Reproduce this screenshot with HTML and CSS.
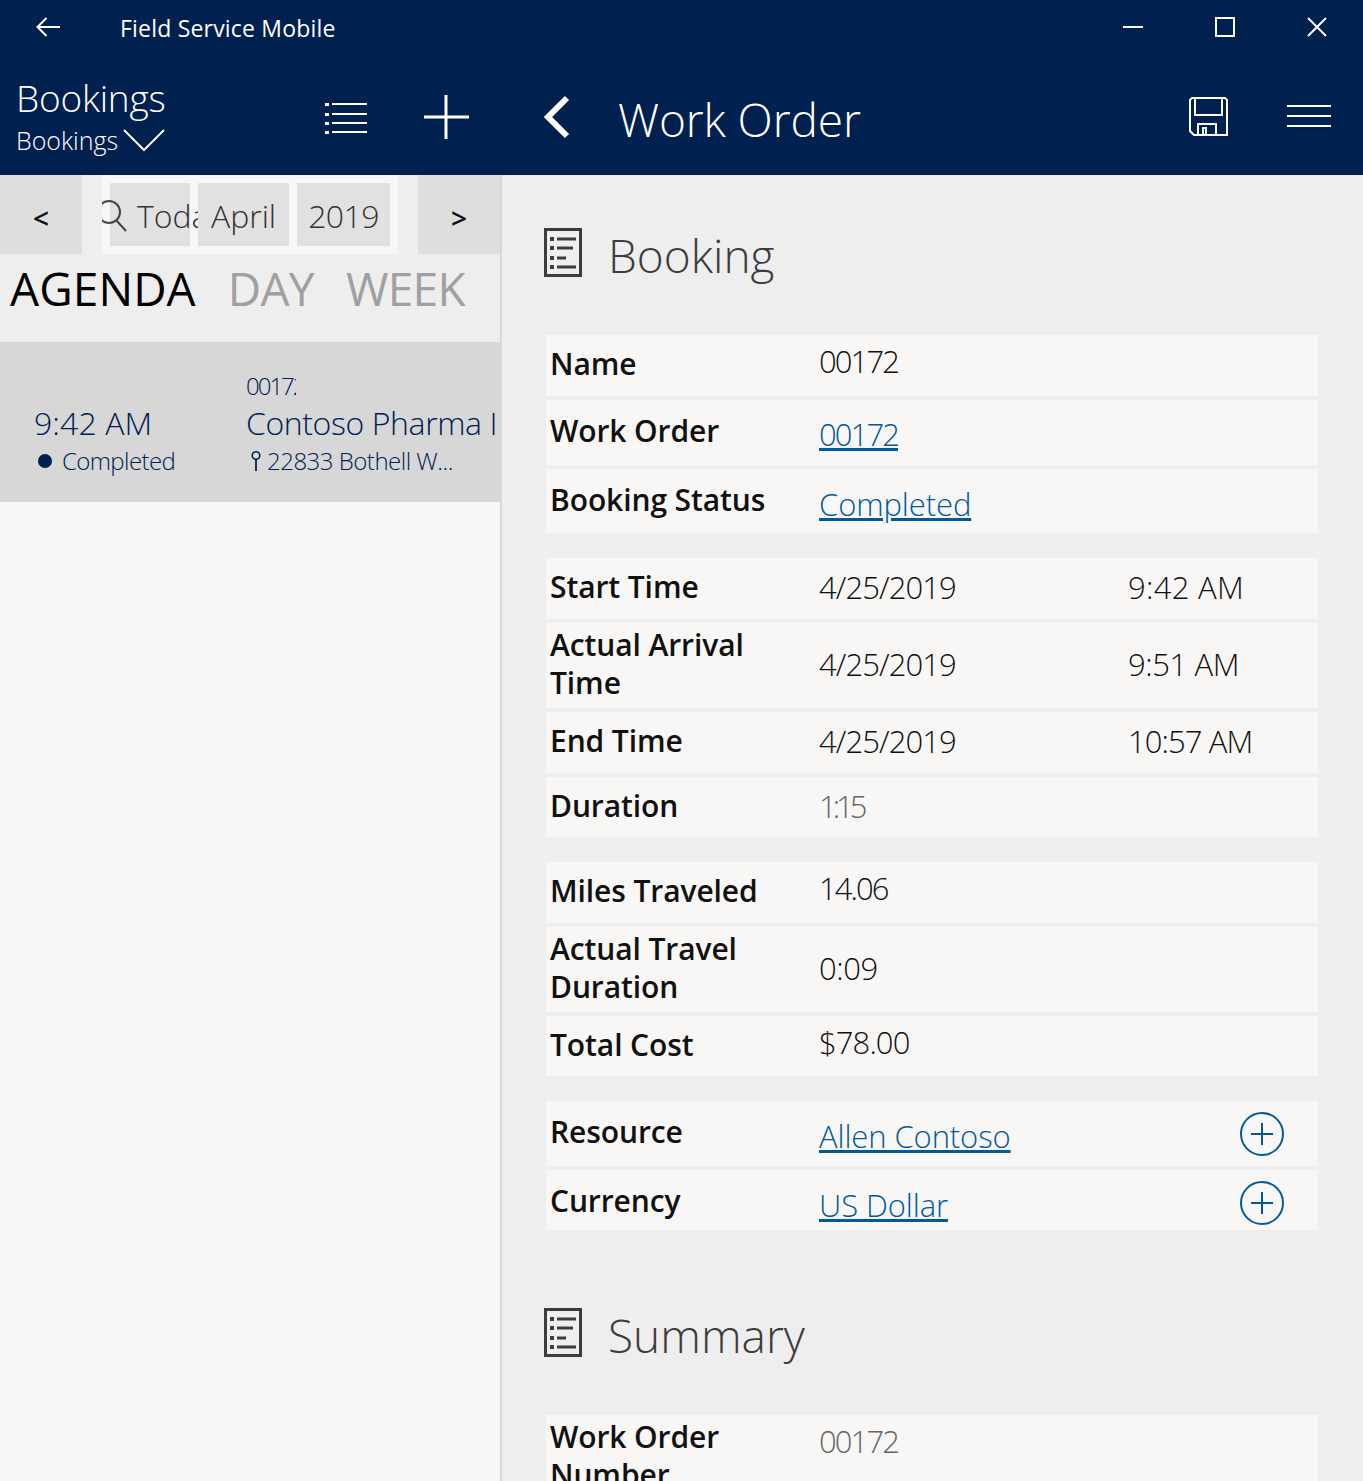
FILE: index.html
```html
<!DOCTYPE html>
<html lang="en">
<head>
    <meta charset="UTF-8">
    <meta name="viewport" content="width=device-width, initial-scale=1.0">
    <title>Field Service Mobile</title>
    <link rel="stylesheet" href="styles.css">
</head>
<body>

<header class="topbar">
    <div class="titlebar">
        <svg class="back-arrow" width="24" height="20" viewBox="0 0 24 20"><path d="M24 10H1.500M10.500 1 1.500 10l9 9" fill="none" stroke="#fff" stroke-width="2"/></svg>
        <span class="app-name">Field Service Mobile</span>
        <div class="window-btns">
            <svg width="20" height="20" viewBox="0 0 20 20"><path d="M0 10h20" stroke="#fff" stroke-width="2"/></svg>
            <svg width="20" height="20" viewBox="0 0 20 20"><rect x="1" y="1" width="18" height="18" fill="none" stroke="#fff" stroke-width="2"/></svg>
            <svg width="20" height="20" viewBox="0 0 20 20"><path d="M1 1l18 18M19 1 1 19" fill="none" stroke="#fff" stroke-width="2"/></svg>
        </div>
    </div>
    <div class="appbar">
        <div class="appbar-left">
            <div class="view-title">
                <div class="view-name">Bookings</div>
                <div class="view-sub">Bookings
                    <svg width="42" height="24" viewBox="0 0 42 24"><path d="M1 2l20 20L41 2" fill="none" stroke="#fff" stroke-width="2"/></svg>
                </div>
            </div>
            <svg class="list-icon" width="42" height="32" viewBox="0 0 42 32">
                <path d="M7 2h35M7 12h35M7 21h35M7 30h35" stroke="#fff" stroke-width="2"/>
                <path d="M0 1h4v3H0zM0 11h4v3H0zM0 20h4v3H0zM0 29h4v3H0z" fill="#fff"/>
            </svg>
            <svg class="plus-icon" width="45" height="44" viewBox="0 0 45 44"><path d="M0 22h45M22 0v44" stroke="#fff" stroke-width="3"/></svg>
        </div>
        <div class="appbar-right">
            <svg class="chevron" width="28" height="44" viewBox="0 0 28 44"><path d="M24 3 5 22l19 19" fill="none" stroke="#fff" stroke-width="6"/></svg>
            <span class="form-title">Work Order</span>
            <svg class="save-icon" width="39" height="39" viewBox="0 0 39 39">
                <path d="M3 1h33l2 2v35H5l-4-4V3z" fill="none" stroke="#fff" stroke-width="2"/>
                <path d="M6 1v17h27V1M9 38V27h18v11M14 38v-7h3v7" fill="none" stroke="#fff" stroke-width="2"/>
            </svg>
            <svg class="menu-icon" width="44" height="24" viewBox="0 0 44 24"><path d="M0 2h44M0 12h44M0 22h44" stroke="#fff" stroke-width="2"/></svg>
        </div>
    </div>
</header>

<main class="content">
    <section class="left-pane">
        <div class="date-nav">
            <div class="nav-btn">&lt;</div>
            <div class="date-box">
                <div class="date-cell cell-today">
                    <svg class="search-icon" width="26" height="34" viewBox="0 0 26 34"><circle cx="7" cy="13" r="11" fill="none" stroke="#444" stroke-width="2"/><path d="M14 21l10 11" stroke="#444" stroke-width="2"/></svg>
                    <span class="today-text">Today</span>
                </div>
                <div class="date-cell cell-month">April</div>
                <div class="date-cell cell-year">2019</div>
            </div>
            <div class="nav-btn">&gt;</div>
        </div>
        <div class="view-tabs">
            <span class="tab active">AGENDA</span>
            <span class="tab">DAY</span>
            <span class="tab">WEEK</span>
        </div>
        <div class="agenda-item">
            <div class="agenda-time">
                <div class="time-text">9:42 AM</div>
                <div class="status-line"><span class="status-dot"></span>Completed</div>
            </div>
            <div class="agenda-info">
                <div class="agenda-num"><span>00172</span></div>
                <div class="agenda-name">Contoso Pharma Inc</div>
                <div class="agenda-addr">
                    <svg width="12" height="22" viewBox="0 0 12 22"><circle cx="6" cy="5.500" r="3.800" fill="none" stroke="#002050" stroke-width="1.600"/><path d="M6 9v12" stroke="#002050" stroke-width="1.800"/></svg>
                    22833 Bothell W...
                </div>
            </div>
        </div>
    </section>

    <section class="right-pane">
        <h2 class="section-title">
            <svg class="section-icon" width="38" height="49" viewBox="0 0 38 49">
                <rect x="1.500" y="1.500" width="35" height="46" fill="none" stroke="#3c3c3c" stroke-width="3"/>
                <path d="M13 11h19M13 20h16M13 30h9M13 39h19" stroke="#3c3c3c" stroke-width="3"/>
                <path d="M6 9h4v4H6zM6 18h4v4H6zM6 28h4v4H6zM6 37h4v4H6z" fill="#3c3c3c"/>
            </svg>
            Booking
        </h2>

        <div class="field-group">
            <div class="row h61"><span class="label">Name</span><span class="value num up">00172</span></div>
            <div class="row h65"><span class="label">Work Order</span><a class="link num" href="#">00172</a></div>
            <div class="row h64"><span class="label down">Booking Status</span><a class="link low" href="#">Completed</a></div>
        </div>

        <div class="field-group">
            <div class="row h61"><span class="label">Start Time</span><span class="value date">4/25/2019</span><span class="value wide">9:42 AM</span></div>
            <div class="row h85"><span class="label">Actual Arrival Time</span><span class="value date">4/25/2019</span><span class="value">9:51 AM</span></div>
            <div class="row h61"><span class="label">End Time</span><span class="value date">4/25/2019</span><span class="value date">10:57 AM</span></div>
            <div class="row h60"><span class="label down">Duration</span><span class="value narrow down muted">1:15</span></div>
        </div>

        <div class="field-group">
            <div class="row h61"><span class="label">Miles Traveled</span><span class="value num up">14.06</span></div>
            <div class="row h85"><span class="label">Actual Travel Duration</span><span class="value">0:09</span></div>
            <div class="row h60"><span class="label down">Total Cost</span><span class="value date up">$78.00</span></div>
        </div>

        <div class="field-group">
            <div class="row h65"><span class="label">Resource</span><a class="link low" href="#">Allen Contoso</a>
                <svg class="add-icon" width="44" height="44" viewBox="0 0 44 44"><circle cx="22" cy="22" r="21" fill="none" stroke="#005a9e" stroke-width="2"/><path d="M11 22h22M22 11v22" stroke="#005a9e" stroke-width="2"/></svg>
            </div>
            <div class="row h60"><span class="label lower">Currency</span><a class="link lower" href="#">US Dollar</a>
                <svg class="add-icon" width="44" height="44" viewBox="0 0 44 44"><circle cx="22" cy="22" r="21" fill="none" stroke="#005a9e" stroke-width="2"/><path d="M11 22h22M22 11v22" stroke="#005a9e" stroke-width="2"/></svg>
            </div>
        </div>

        <h2 class="section-title summary-title">
            <svg class="section-icon" width="38" height="49" viewBox="0 0 38 49">
                <rect x="1.500" y="1.500" width="35" height="46" fill="none" stroke="#3c3c3c" stroke-width="3"/>
                <path d="M13 11h19M13 20h16M13 30h9M13 39h19" stroke="#3c3c3c" stroke-width="3"/>
                <path d="M6 9h4v4H6zM6 18h4v4H6zM6 28h4v4H6zM6 37h4v4H6z" fill="#3c3c3c"/>
            </svg>
            Summary
        </h2>

        <div class="field-group">
            <div class="row h85 row-top"><span class="label">Work Order Number</span><span class="value num muted">00172</span></div>
        </div>
    </section>
</main>

</body>
</html>
```

FILE: styles.css
```css
html, body {
    margin: 0;
    height: 1481px;
    overflow: hidden;
}

body {
    font-family: "Open Sans", "Noto Sans", sans-serif;
    background-color: #f8f7f5;
}

svg {
    display: block;
    flex: none;
}

.topbar {
    height: 175px;
    background-color: #002050;
    color: #fff;
}

.titlebar {
    height: 58px;
    display: flex;
    align-items: center;
    padding-left: 36px;
    padding-right: 36px;
}

.back-arrow {
    margin-bottom: 4px;
}

.app-name {
    margin-left: 60px;
    margin-bottom: 2px;
    font-size: 23px;
    letter-spacing: 0.2px;
}

.window-btns {
    margin-left: auto;
    margin-bottom: 4px;
    display: flex;
    gap: 72px;
}

.appbar {
    height: 117px;
    display: flex;
}

.appbar-left {
    width: 502px;
    flex: none;
    display: flex;
    padding-left: 16px;
    box-sizing: border-box;
}

.view-title {
    width: 150px;
}

.view-name {
    font-size: 37px;
    font-weight: 300;
    letter-spacing: -0.2px;
    line-height: 46px;
    margin-top: 17px;
}

.view-sub {
    display: flex;
    align-items: center;
    gap: 5px;
    font-size: 25px;
    font-weight: 300;
    line-height: 38px;
    white-space: nowrap;
}

.list-icon {
    margin-left: 159px;
    margin-top: 44px;
}

.plus-icon {
    margin-left: 57px;
    margin-top: 37px;
}

.appbar-right {
    flex: 1;
    display: flex;
    align-items: flex-start;
    padding-left: 41px;
    padding-right: 32px;
}

.chevron {
    margin-top: 37px;
}

.form-title {
    margin-left: 47px;
    margin-top: 28px;
    font-size: 46px;
    font-weight: 300;
    letter-spacing: -0.1px;
    line-height: 66px;
}

.save-icon {
    margin-left: auto;
    margin-top: 39px;
}

.menu-icon {
    margin-left: 59px;
    margin-top: 46px;
}

.content {
    display: flex;
    height: 1306px;
}

.left-pane {
    width: 500px;
    flex: none;
    border-right: 2px solid #d8d8d8;
}

.date-nav {
    height: 79px;
    display: flex;
    background-color: #eeeeee;
    justify-content: space-between;
}

.nav-btn {
    width: 82px;
    height: 79px;
    background-color: #dedede;
    display: flex;
    align-items: center;
    justify-content: center;
    font-size: 28px;
    font-weight: 600;
    color: #111;
    padding-top: 6px;
    box-sizing: border-box;
}

.date-box {
    width: 296px;
    background-color: #f8f7f5;
    display: flex;
    gap: 8px;
    padding: 8px;
    box-sizing: border-box;
}

.date-cell {
    height: 63px;
    background-color: #e1e1e1;
    font-size: 32px;
    font-weight: 300;
    color: #333;
    line-height: 65px;
    text-align: center;
}

.cell-today {
    width: 80px;
    position: relative;
    text-align: left;
}

.cell-month {
    width: 91px;
}

.cell-year {
    width: 93px;
    letter-spacing: -0.6px;
}

.search-icon {
    position: absolute;
    left: -8px;
    top: 16px;
}

/* runs past its cell and is cut off where April starts */
.today-text {
    display: block;
    width: 88px;
    overflow: hidden;
    padding-left: 27px;
    box-sizing: border-box;
    white-space: nowrap;
}

.view-tabs {
    height: 88px;
    background-color: #eeeeee;
    display: flex;
    gap: 32px;
    padding-left: 10px;
}

.tab {
    font-size: 46px;
    letter-spacing: -0.7px;
    line-height: 68px;
    color: #a0a0a0;
}

.tab.active {
    color: #000;
    letter-spacing: 0.1px;
}

.agenda-item {
    height: 160px;
    background-color: #d7d7d7;
    color: #002050;
    display: flex;
    font-weight: 300;
    overflow: hidden;
}

.agenda-time {
    width: 246px;
    flex: none;
    padding-left: 34px;
    box-sizing: border-box;
    padding-top: 59px;
}

.time-text {
    font-size: 32px;
    line-height: 44px;
    letter-spacing: 0.1px;
}

.status-line {
    display: flex;
    align-items: center;
    font-size: 24px;
    line-height: 30px;
    letter-spacing: -0.6px;
    margin-top: 1px;
}

.status-dot {
    width: 14px;
    height: 14px;
    border-radius: 50%;
    background-color: #002050;
    margin-left: 4px;
    margin-right: 10px;
}

.agenda-info {
    width: 252px;
    overflow: hidden;
    white-space: nowrap;
    padding-top: 29px;
}

.agenda-num {
    font-size: 24px;
    line-height: 30px;
    width: 50px;
    overflow: hidden;
    letter-spacing: -2px;
}

.agenda-name {
    font-size: 32px;
    line-height: 44px;
    letter-spacing: -0.4px;
}

.agenda-addr {
    display: flex;
    align-items: center;
    gap: 5px;
    padding-left: 4px;
    font-size: 24px;
    line-height: 30px;
    letter-spacing: -0.5px;
    margin-top: 1px;
}

.right-pane {
    flex: 1;
    background-color: #eeeeee;
    padding-left: 44px;
    padding-right: 45px;
    overflow: hidden;
}

.section-title {
    margin: 0;
    height: 160px;
    display: flex;
    align-items: flex-start;
    gap: 26px;
    font-size: 46px;
    font-weight: 300;
    color: #3c3c3c;
    line-height: 62px;
    padding-top: 49px;
    box-sizing: border-box;
    letter-spacing: 0;
}

.section-icon {
    margin-top: 4px;
    margin-left: -2px;
}

.summary-title {
    height: 160px;
}

.field-group {
    display: flex;
    flex-direction: column;
    gap: 4px;
    margin-bottom: 25px;
}

.row {
    display: grid;
    grid-template-columns: 269px 309px 1fr;
    align-items: center;
    background-color: #f8f7f5;
    padding-left: 4px;
    padding-bottom: 4px;
    position: relative;
    font-size: 31px;
    box-sizing: border-box;
}

.row-top {
    align-items: start;
    padding-bottom: 0;
}

.h60 { height: 60px; }
.h61 { height: 61px; }
.h64 { height: 64px; }
.h65 { height: 65px; }
.h85 { height: 85px; }

.label {
    font-weight: 600;
    color: #111;
    padding-right: 30px;
    line-height: 38px;
    font-size: 30px;
    letter-spacing: -0.1px;
}

.value {
    font-weight: 300;
    color: #111;
    letter-spacing: -0.4px;
}

.link {
    font-weight: 300;
    color: #005a9e;
    text-decoration: underline;
    letter-spacing: -0.1px;
    margin-top: 6px;
}

.num {
    letter-spacing: -1.9px;
}

.date {
    letter-spacing: -0.9px;
}

.wide {
    letter-spacing: 0.3px;
}

.narrow {
    letter-spacing: -4px;
}

.muted {
    color: #666;
}

.up {
    margin-top: -4px;
}

.num.up {
    margin-top: -6px;
}

.down {
    margin-top: 2px;
}

.link.low {
    margin-top: 9px;
}

.lower {
    margin-top: 5px;
}

.link.lower {
    margin-top: 13px;
}

.row-top .label {
    margin-top: 3px;
}

.row-top .value {
    margin-top: 5px;
}

.add-icon {
    position: absolute;
    right: 34px;
    top: 11px;
}
```
